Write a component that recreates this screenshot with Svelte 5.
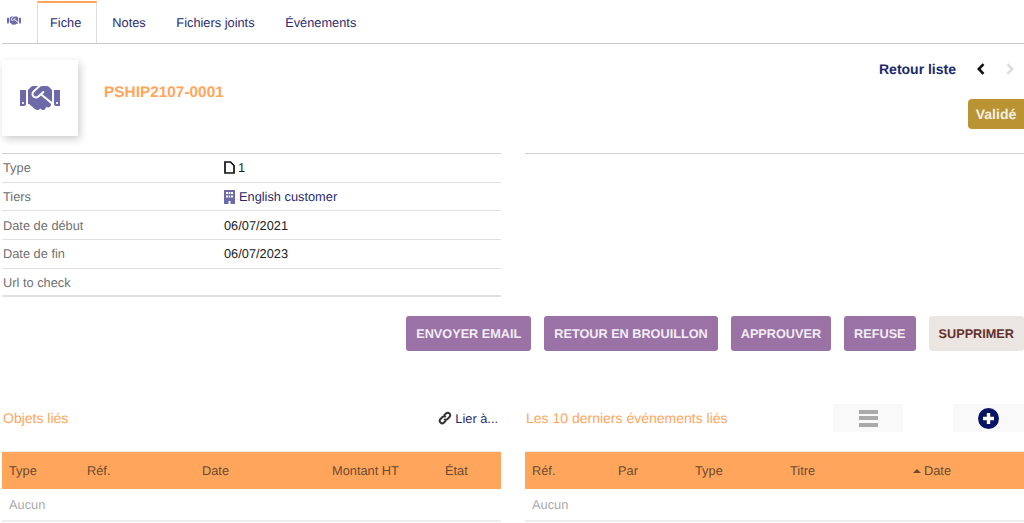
<script>
	const tabs = ["Fiche", "Notes", "Fichiers joints", "Événements"];
	const actions = ["ENVOYER EMAIL", "RETOUR EN BROUILLON", "APPROUVER", "REFUSE"];
	const linkedCols = [
		{ label: "Type", width: 78 },
		{ label: "Réf.", width: 115 },
		{ label: "Date", width: 130 },
		{ label: "Montant HT", width: 113 },
		{ label: "État", width: 56 }
	];
	const eventCols = [
		{ label: "Réf.", width: 86 },
		{ label: "Par", width: 77 },
		{ label: "Type", width: 95 },
		{ label: "Titre", width: 123 },
		{ label: "Date", width: 111, sorted: true }
	];
	const handshake = "M434.700 64h-85.900c-8 0-15.700 3-21.600 8.400l-98.300 90c-.1.100-.2.300-.3.400-16.600 15.600-16.300 40.500-2.100 56 12.700 13.900 39.400 17.600 56.100 2.700.1-.1.300-.1.400-.2l79.900-73.200c6.500-5.900 16.700-5.500 22.600 1 6 6.500 5.500 16.600-1 22.600l-26.100 23.900L504 313.800c2.900 2.400 5.500 5 7.900 7.700V128l-54.600-54.600c-5.900-6-14.100-9.400-22.600-9.400zM544 128.200v223.900c0 17.700 14.300 32 32 32h64V128.200h-96zm48 223.900c-8.800 0-16-7.200-16-16s7.200-16 16-16 16 7.200 16 16-7.200 16-16 16zM0 384h64c17.700 0 32-14.300 32-32V128.200H0V384zm48-63.900c8.800 0 16 7.200 16 16s-7.200 16-16 16-16-7.200-16-16c0-8.900 7.200-16 16-16zm435.900 18.600L334.600 217.500l-30 27.500c-29.700 27.100-75.200 24.500-101.700-4.400-26.900-29.400-24.800-74.900 4.400-101.700L289.100 64h-83.800c-8.500 0-16.600 3.400-22.600 9.400L128 128v223.900h18.300l90.500 81.900c27.400 22.300 67.700 18.100 90-9.300l.2-.2 17.900 15.500c15.900 13 39.400 10.500 52.300-5.400l31.400-38.600 5.400 4.400c13.700 11.100 33.900 9.100 45-4.700l9.500-11.700c11.200-13.800 9.100-33.900-4.600-45.100z";
</script>

{#snippet shake(size)}
	<svg width={size} height={size * 0.8} viewBox="0 0 640 512" aria-hidden="true">
		<path d={handshake} />
	</svg>
{/snippet}

{#snippet table(cols, pad)}
	<div class="thead" style="padding-left: {pad}px">
		{#each cols as c}
			<span style="width: {c.width}px">
				{#if c.sorted}<i class="caret"></i>{/if}{c.label}
			</span>
		{/each}
	</div>
	<div class="empty" style="padding-left: {pad}px">Aucun</div>
{/snippet}

<main>
	<nav class="tabs">
		<span class="tab-icon">{@render shake(14)}</span>
		{#each tabs as t, i}
			<a href="#top" class="tab" class:active={i == 0}>{t}</a>
		{/each}
	</nav>

	<header class="head">
		<div class="photo">{@render shake(40)}</div>
		<div class="ref">PSHIP2107-0001</div>
		<div class="side">
			<div class="pager">
				<a href="#top">Retour liste</a>
				<svg class="chev" width="10" height="12" viewBox="0 0 10 12"><path d="M7.500 1.200 2.800 6l4.700 4.800" /></svg>
				<svg class="chev off" width="10" height="12" viewBox="0 0 10 12"><path d="M2.500 1.200 7.200 6l-4.700 4.800" /></svg>
			</div>
			<span class="status">Validé</span>
		</div>
	</header>

	<section class="fiche">
		<div class="fields">
			<div class="row">
				<span class="key">Type</span>
				<span class="val">
					<svg class="doc" width="11" height="13" viewBox="0 0 11 13"><path d="M1 1h5.500L10 4.500V12H1z" /></svg>1
				</span>
			</div>
			<div class="row">
				<span class="key">Tiers</span>
				<a href="#top" class="val link">
					<svg width="11" height="14" viewBox="0 0 11 14"><path fill="#6c6aa8" fill-rule="evenodd" d="M0 0h11v14H6.500v-3h-2v3H0zM2 2v2h2V2zM4.700 2v2h1.600V2zM7 2v2h2V2zM2 5.500v2h2v-2zM4.700 5.500v2h1.600v-2zM7 5.500v2h2v-2z" /></svg>
					English customer
				</a>
			</div>
			<div class="row">
				<span class="key">Date de début</span>
				<span class="val">06/07/2021</span>
			</div>
			<div class="row">
				<span class="key">Date de fin</span>
				<span class="val">06/07/2023</span>
			</div>
			<div class="row">
				<span class="key">Url to check</span>
				<span class="val"></span>
			</div>
		</div>
		<div class="fields-right"></div>
	</section>

	<div class="actions">
		{#each actions as a}
			<a href="#top" class="btn">{a}</a>
		{/each}
		<a href="#top" class="btn delete">SUPPRIMER</a>
	</div>

	<div class="columns">
		<section class="left">
			<div class="title-row">
				<h3>Objets liés</h3>
				<a href="#top" class="lier">
					<svg width="14" height="14" viewBox="0 0 14 14" fill="none" stroke="#333" stroke-width="2">
						<path d="M6 4.500 8 2.500a2.400 2.400 0 0 1 3.500 3.500L9.500 8a2.400 2.400 0 0 1-3.300 0" />
						<path d="M8 9.500 6 11.500A2.400 2.400 0 0 1 2.500 8L4.500 6a2.400 2.400 0 0 1 3.300 0" />
					</svg>
					Lier à...
				</a>
			</div>
			{@render table(linkedCols, 7)}
		</section>
		<section class="right">
			<div class="title-row">
				<h3>Les 10 derniers événements liés</h3>
				<div class="tools">
					<span class="tool list"><i></i><i></i><i></i></span>
					<span class="tool plus">
						<svg width="21" height="21" viewBox="0 0 21 21">
							<circle cx="10.500" cy="10.500" r="10.500" fill="#0a1464" />
							<path d="M10.500 5v11M5 10.500h11" stroke="#fff" stroke-width="3.400" />
						</svg>
					</span>
				</div>
			</div>
			{@render table(eventCols, 7)}
		</section>
	</div>
</main>

<style>
	:global(body) {
		background: #fff;
	}
	main {
		font-family: "Liberation Sans", Arial, sans-serif;
		font-size: 12.8px;
		text-rendering: geometricPrecision;
		color: #222;
		width: 1024px;
		height: 523px;
		overflow: hidden;
	}
	a {
		text-decoration: none;
		color: #263c5c;
	}

	.tabs {
		display: flex;
		align-items: stretch;
		height: 43px;
		margin-left: 2px;
		border-bottom: 1px solid #c8c8c8;
	}
	.tab-icon {
		width: 35px;
		display: flex;
		align-items: center;
		padding: 0 0 1px 5px;
		box-sizing: border-box;
		fill: #6c6aa8;
	}
	.tab {
		display: flex;
		align-items: center;
		padding: 0 15.300px 2px;
		color: #2b2a6e;
		border-top: 2px solid transparent;
		margin-top: 1px;
		box-sizing: border-box;
	}
	.tab.active {
		border: 1px solid #ddd;
		border-top: 2px solid #ffa65c;
		border-bottom: none;
		width: 60px;
		padding: 0 0 2px 12px;
	}

	.head {
		display: flex;
		height: 109px;
		padding-left: 2px;
	}
	.photo {
		width: 76px;
		height: 76px;
		margin-top: 16px;
		display: flex;
		align-items: center;
		justify-content: center;
		background: #fff;
		box-shadow: 2px 3px 8px rgba(0, 0, 0, 0.2);
		fill: #6c6aa8;
	}
	.ref {
		margin: 40px 0 0 26px;
		font-size: 15.400px;
		line-height: 18px;
		font-weight: 700;
		color: #ffa65c;
		flex: 1;
	}
	.side {
		display: flex;
		flex-direction: column;
		align-items: flex-end;
	}
	.pager {
		display: flex;
		align-items: center;
		height: 16px;
		margin-top: 17px;
		padding-right: 9px;
	}
	.pager a {
		font-size: 14px;
		font-weight: 700;
		color: #1c2a6e;
		margin-right: 20px;
	}
	.chev {
		fill: none;
		stroke: #111;
		stroke-width: 2.600;
		margin-right: 19px;
	}
	.chev.off {
		stroke: #ddd;
		margin-right: 0;
	}
	.status {
		margin-top: 22px;
		width: 56px;
		height: 30px;
		line-height: 30px;
		text-align: center;
		font-size: 14px;
		font-weight: 700;
		color: #f4efe2;
		background: #ba9433;
		border-radius: 4px 0 0 4px;
	}

	.fiche {
		display: flex;
		justify-content: space-between;
		padding-left: 2px;
	}
	.fields,
	.fields-right {
		width: 499px;
		border-top: 1px solid #d0d0d0;
	}
	.row {
		display: flex;
		align-items: center;
		height: 28.700px;
		box-sizing: border-box;
		border-bottom: 1px solid #e0e0e0;
	}
	.row:last-child {
		border-bottom: 2px solid #e0e0e0;
	}
	.key {
		width: 222px;
		padding-left: 1px;
		box-sizing: border-box;
		color: #707070;
	}
	.val {
		display: flex;
		align-items: center;
		gap: 3px;
		color: #222;
	}
	.val.link {
		color: #2b2a6e;
		gap: 4px;
	}
	.doc {
		fill: none;
		stroke: #111;
		stroke-width: 1.700;
	}

	.actions {
		display: flex;
		justify-content: flex-end;
		gap: 13px;
		margin-top: 18.500px;
	}
	.btn {
		display: block;
		height: 35px;
		line-height: 37px;
		padding: 0 10px;
		font-size: 12.700px;
		font-weight: 700;
		color: #f2ecf5;
		background: #9b72a5;
		border-radius: 3px;
		white-space: nowrap;
	}
	.btn.delete {
		color: #63302c;
		background: #ece6e2;
	}

	.columns {
		display: flex;
		justify-content: space-between;
		margin-top: 53px;
		padding-left: 2px;
	}
	.left,
	.right {
		width: 499px;
	}
	.title-row {
		display: flex;
		align-items: center;
		justify-content: space-between;
		height: 29px;
		margin-bottom: 18px;
	}
	h3 {
		margin: 0;
		font-size: 14px;
		font-weight: 400;
		color: #ffa65c;
		padding-left: 1px;
	}
	.lier {
		display: flex;
		align-items: center;
		gap: 3px;
		color: #2b2a6e;
		margin-right: 3px;
	}
	.tools {
		display: flex;
		gap: 50px;
	}
	.tool {
		width: 70px;
		height: 28px;
		background: #f9f9f9;
		display: flex;
		flex-direction: column;
		align-items: center;
		justify-content: center;
	}
	.tool.plus {
		width: 71px;
	}
	.list {
		gap: 2.500px;
	}
	.list i {
		display: block;
		width: 19px;
		height: 4px;
		background: #aaa;
	}

	.thead {
		display: flex;
		align-items: center;
		height: 36px;
		padding-top: 1px;
		background: #ffa65c;
		color: #6a4a30;
		border-top: 1px solid #eee;
	}
	.thead span {
		display: block;
		white-space: nowrap;
		flex: none;
	}
	.caret {
		display: inline-block;
		width: 0;
		height: 0;
		border-left: 4px solid transparent;
		border-right: 4px solid transparent;
		border-bottom: 4px solid #6a4a30;
		margin: 0 3px 2px 0;
	}
	.empty {
		height: 31px;
		line-height: 32px;
		color: #aaa;
		border-bottom: 2px solid #eee;
	}
</style>
